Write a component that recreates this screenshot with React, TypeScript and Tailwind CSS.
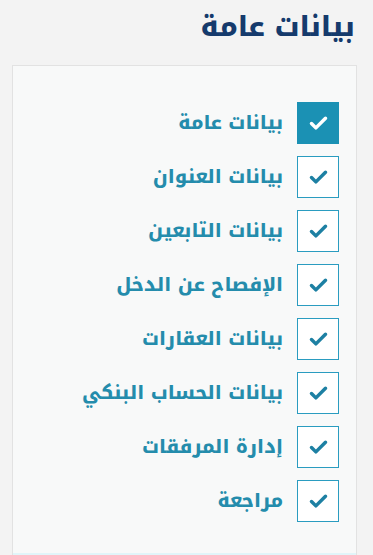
import { Check } from "lucide-react";

const steps = [
  { label: "بيانات عامة", active: true },
  { label: "بيانات العنوان", active: false },
  { label: "بيانات التابعين", active: false },
  { label: "الإفصاح عن الدخل", active: false },
  { label: "بيانات العقارات", active: false },
  { label: "بيانات الحساب البنكي", active: false },
  { label: "إدارة المرفقات", active: false },
  { label: "مراجعة", active: false },
];

export default function App() {
  return (
    <div
      dir="rtl"
      className="min-h-[555px] bg-[#f3f3f3] font-['Noto_Kufi_Arabic','Noto_Sans_Arabic','DejaVu_Sans',sans-serif]"
    >
      <h1 className="pr-[18px] pb-[11px] text-[28px] font-extrabold leading-[54px] text-[#153a6c]">
        بيانات عامة
      </h1>
      <div className="ml-[12px] mr-[16px] border border-[#e2e2e2] bg-[#f8f9f9]">
        <ul className="flex flex-col gap-[12px] pr-[17px] pt-[36px] pb-[31px]">
          {steps.map((step) => (
            <li key={step.label} className="flex items-center gap-[14px]">
              <span
                className={
                  step.active
                    ? "flex h-[42px] w-[42px] items-center justify-center bg-[#1b91b4] text-white"
                    : "flex h-[42px] w-[42px] items-center justify-center border border-[#2a9cc0] bg-white text-[#1d80a3]"
                }
              >
                <Check size={21} strokeWidth={4} />
              </span>
              <span className="text-[19px] font-extrabold text-[#248cac]">
                {step.label}
              </span>
            </li>
          ))}
        </ul>
        <div className="h-[3px] bg-[#e1f5f9]" />
      </div>
    </div>
  );
}
